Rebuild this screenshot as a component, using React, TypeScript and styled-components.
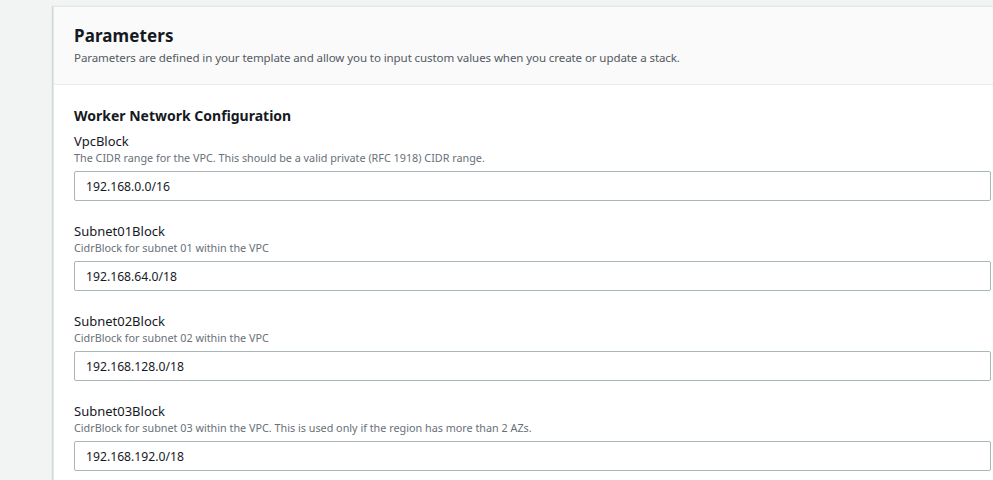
import React from "react";
import styled, { createGlobalStyle } from "styled-components";

const Global = createGlobalStyle`
  html, body { margin: 0; padding: 0; }
  body {
    background: #f2f3f3;
    font-family: "Noto Sans", "Open Sans", sans-serif;
    color: #16191f;
    overflow: hidden;
    width: 993px;
    height: 480px;
  }
`;

const Page = styled.div`
  padding: 6px 0 0 53px;
  width: 993px;
  height: 480px;
  box-sizing: border-box;
  overflow: hidden;
`;

const Card = styled.section`
  width: 958px;
  background: #ffffff;
  border: 1px solid #e4e7e7;
  box-shadow: -1px 0 1px rgba(0, 28, 36, 0.12);
`;

const Header = styled.header`
  background: #fafafa;
  border-bottom: 1px solid #eaeded;
  padding: 18px 20px 18px 20px;
`;

const Title = styled.h2`
  margin: 0;
  font-size: 17px;
  line-height: 21px;
  font-weight: 700;
  letter-spacing: 0.1px;
`;

const Subtitle = styled.p`
  margin: 4px 0 0;
  font-size: 11.55px;
  line-height: 16px;
  color: #545b64;
  letter-spacing: -0.1px;
`;

const Body = styled.div`
  padding: 21px 20px 10px 20px;
`;

const SectionTitle = styled.h3`
  margin: 0 0 6px;
  font-size: 14px;
  line-height: 20px;
  font-weight: 700;
`;

const Field = styled.div`
  display: flex;
  flex-direction: column;
  margin-bottom: 21px;
`;

const Label = styled.label`
  font-size: 13px;
  line-height: 18px;
  color: #16191f;
`;

const Description = styled.span`
  font-size: 10.8px;
  line-height: 16px;
  color: #687078;
  margin-bottom: 5px;
`;

const Input = styled.input`
  box-sizing: border-box;
  width: 917px;
  height: 30px;
  border: 1px solid #aab7b8;
  border-radius: 2px;
  padding: 0 11px;
  font-family: inherit;
  font-size: 12.2px;
  color: #16191f;
  background: #fff;
  outline: none;
`;

const fields = [
  {
    name: "VpcBlock",
    desc: "The CIDR range for the VPC. This should be a valid private (RFC 1918) CIDR range.",
    value: "192.168.0.0/16",
  },
  {
    name: "Subnet01Block",
    desc: "CidrBlock for subnet 01 within the VPC",
    value: "192.168.64.0/18",
  },
  {
    name: "Subnet02Block",
    desc: "CidrBlock for subnet 02 within the VPC",
    value: "192.168.128.0/18",
  },
  {
    name: "Subnet03Block",
    desc: "CidrBlock for subnet 03 within the VPC. This is used only if the region has more than 2 AZs.",
    value: "192.168.192.0/18",
  },
];

export default function App() {
  return (
    <>
      <Global />
      <Page>
        <Card>
          <Header>
            <Title>Parameters</Title>
            <Subtitle>
              Parameters are defined in your template and allow you to input custom values when you create or update a stack.
            </Subtitle>
          </Header>
          <Body>
            <SectionTitle>Worker Network Configuration</SectionTitle>
            {fields.map((f) => (
              <Field key={f.name}>
                <Label>{f.name}</Label>
                <Description>{f.desc}</Description>
                <Input defaultValue={f.value} readOnly />
              </Field>
            ))}
          </Body>
        </Card>
      </Page>
    </>
  );
}
